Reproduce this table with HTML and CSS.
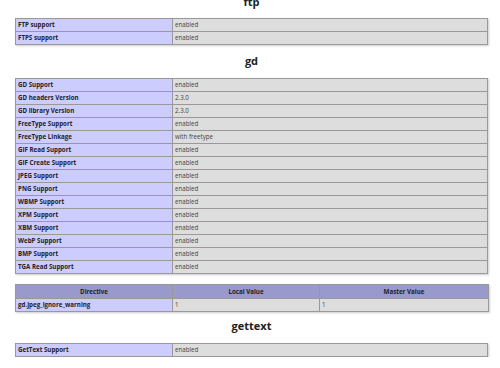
FILE: index.html
```html
<!DOCTYPE html>
<html>
<head>
<meta charset="utf-8">
<link rel="stylesheet" href="styles.css">
</head>
<body>
<div class="page">
  <h2 class="section first">ftp</h2>
  <table class="info">
    <tr><td class="e">FTP support</td><td class="v">enabled</td></tr>
    <tr><td class="e">FTPS support</td><td class="v">enabled</td></tr>
  </table>

  <h2 class="section">gd</h2>
  <table class="info">
    <tr><td class="e">GD Support</td><td class="v">enabled</td></tr>
    <tr><td class="e">GD headers Version</td><td class="v">2.3.0</td></tr>
    <tr><td class="e">GD library Version</td><td class="v">2.3.0</td></tr>
    <tr><td class="e">FreeType Support</td><td class="v">enabled</td></tr>
    <tr><td class="e">FreeType Linkage</td><td class="v">with freetype</td></tr>
    <tr><td class="e">GIF Read Support</td><td class="v">enabled</td></tr>
    <tr><td class="e">GIF Create Support</td><td class="v">enabled</td></tr>
    <tr><td class="e">JPEG Support</td><td class="v">enabled</td></tr>
    <tr><td class="e">PNG Support</td><td class="v">enabled</td></tr>
    <tr><td class="e">WBMP Support</td><td class="v">enabled</td></tr>
    <tr><td class="e">XPM Support</td><td class="v">enabled</td></tr>
    <tr><td class="e">XBM Support</td><td class="v">enabled</td></tr>
    <tr><td class="e">WebP Support</td><td class="v">enabled</td></tr>
    <tr><td class="e">BMP Support</td><td class="v">enabled</td></tr>
    <tr><td class="e">TGA Read Support</td><td class="v">enabled</td></tr>
  </table>

  <table class="info directives">
    <colgroup><col class="c1"><col class="c2"><col class="c3"></colgroup>
    <tr class="h"><th>Directive</th><th>Local Value</th><th>Master Value</th></tr>
    <tr><td class="e">gd.jpeg_ignore_warning</td><td class="v">1</td><td class="v">1</td></tr>
  </table>

  <h2 class="section last">gettext</h2>
  <table class="info">
    <tr><td class="e">GetText Support</td><td class="v">enabled</td></tr>
  </table>
</div>
</body>
</html>
```

FILE: styles.css
```css
html, body {
  margin: 0;
  padding: 0;
  background: #fff;
}

body {
  color: #222;
  font-family: "Open Sans", "DejaVu Sans", sans-serif;
  overflow: hidden;
}

.page {
  width: 473px;
  margin-left: 15px;
}

.section {
  margin: 10px 0 9px;
  height: 14px;
  line-height: 12px;
  font-size: 11px;
  font-weight: bold;
  text-align: center;
  color: #222;
}

.section.first {
  margin-top: -4px;
  margin-bottom: 8px;
}

.section.last {
  margin-top: 8px;
}

.info {
  width: 473px;
  border-collapse: collapse;
  table-layout: fixed;
  box-shadow: 1px 1px 2px #ccc;
}

.info td,
.info th {
  border: 1px solid #999;
  height: 12px;
  padding: 0 2px;
  font-size: 6.2px;
  line-height: 12px;
  white-space: nowrap;
  overflow: hidden;
  vertical-align: middle;
}

.info td.e {
  width: 152px;
  background: #ccf;
  font-weight: bold;
  color: #222;
}

.info td.v {
  background: #ddd;
  color: #444;
}

.directives {
  margin-top: 10px;
}

.directives .c1 { width: 157px; }
.directives .c2 { width: 147px; }
.directives .c3 { width: 169px; }

.directives tr.h th {
  background: #99c;
  font-weight: bold;
  text-align: center;
  height: 13px;
  line-height: 13px;
  color: #222;
}
```
